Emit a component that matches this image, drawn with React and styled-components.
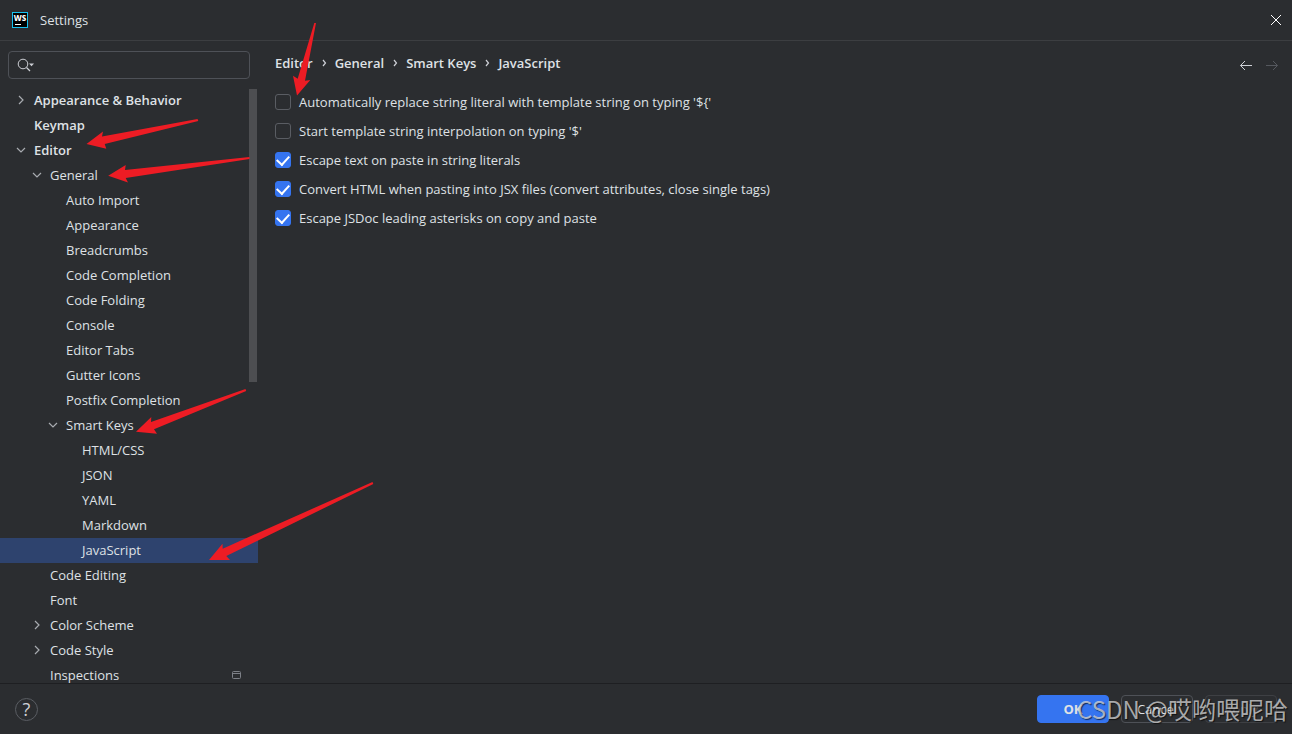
// App.jsx
import React, { useState } from "react";
import styled, { createGlobalStyle } from "styled-components";

const GlobalStyle = createGlobalStyle`
  * {
    box-sizing: border-box;
  }

  body {
    margin: 0;
    background: #2b2d30;
    color: #dfe1e5;
    font-family: "Open Sans", "Noto Sans", sans-serif;
    font-size: 13px;
  }

  button,
  input {
    font: inherit;
    color: inherit;
  }
`;

const Dialog = styled.div`
  position: relative;
  display: flex;
  flex-direction: column;
  height: 100vh;
  overflow: hidden;
`;

const TitleBar = styled.header`
  display: flex;
  align-items: center;
  gap: 12px;
  flex: 0 0 41px;
  padding: 0 8px 0 12px;
  border-bottom: 1px solid #3c3e41;
`;

const Title = styled.h1`
  flex: 1;
  margin: 0;
  font-size: 13px;
  font-weight: 400;
  line-height: 20px;
`;

const IconButton = styled.button`
  display: flex;
  align-items: center;
  justify-content: center;
  width: 16px;
  height: 16px;
  padding: 0;
  border: none;
  background: none;
`;

const Body = styled.div`
  display: flex;
  flex: 1;
  min-height: 0;
`;

const Sidebar = styled.aside`
  display: flex;
  flex-direction: column;
  flex: 0 0 258px;
  padding-top: 10px;
`;

const SearchBox = styled.label`
  display: flex;
  align-items: center;
  gap: 4px;
  flex: 0 0 28px;
  margin: 0 8px 9px;
  padding: 0 8px;
  border: 1px solid #4e5157;
  border-radius: 4px;
`;

const SearchInput = styled.input`
  flex: 1;
  min-width: 0;
  padding: 0;
  border: none;
  outline: none;
  background: none;
`;

const TreePane = styled.div`
  position: relative;
  flex: 1;
  min-height: 0;
  overflow: hidden;
`;

const Tree = styled.ul`
  margin: 0;
  padding: 0;
  list-style: none;
`;

const TreeRow = styled.button`
  display: flex;
  align-items: center;
  gap: 5px;
  width: 100%;
  height: 25px;
  padding: 0 16px 2px ${({ $level }) => 13 + $level * 16}px;
  border: none;
  background: ${({ $selected }) => ($selected ? "#2e436e" : "none")};
  font-weight: ${({ $level }) => ($level === 0 ? 600 : 400)};
  line-height: 20px;
  text-align: left;
`;

const ArrowSlot = styled.span`
  display: flex;
  width: 16px;
  height: 16px;
`;

const RowLabel = styled.span`
  flex: 1;
`;

const ScrollThumb = styled.div`
  position: absolute;
  top: 1px;
  right: 1px;
  width: 8px;
  height: 293px;
  background: #4d4e51;
`;

const Content = styled.main`
  flex: 1;
  min-width: 0;
  padding: 12px 12px 0 17px;
`;

const ContentHead = styled.div`
  display: flex;
  align-items: center;
  justify-content: space-between;
  margin-bottom: 19px;
`;

const Breadcrumbs = styled.nav`
  display: flex;
  align-items: center;
  gap: 7px;
  font-weight: 600;
  line-height: 20px;
`;

const Crumb = styled.a`
  color: inherit;
  text-decoration: none;
`;

const HistoryButtons = styled.div`
  display: flex;
  gap: 10px;
  padding-top: 4px;
`;

const OptionList = styled.div`
  display: flex;
  flex-direction: column;
  align-items: flex-start;
  gap: 9px;
`;

const Option = styled.label`
  display: flex;
  align-items: center;
  gap: 8px;
  line-height: 20px;
`;

const CheckBox = styled.input`
  display: grid;
  place-items: center;
  appearance: none;
  width: 16px;
  height: 16px;
  margin: 0;
  border: 1px solid #5a5d63;
  border-radius: 3px;

  &:checked {
    border-color: #3574f0;
    background: #3574f0;
  }

  &:checked::after {
    content: "";
    width: 6px;
    height: 10px;
    margin-bottom: 4px;
    border: solid #fff;
    border-width: 0 2px 2px 0;
    transform: rotate(42deg);
  }
`;

const Footer = styled.footer`
  display: flex;
  align-items: center;
  gap: 12px;
  flex: 0 0 51px;
  padding: 0 15px;
  border-top: 1px solid #1e1f22;
`;

const HelpButton = styled.button`
  width: 23px;
  height: 23px;
  margin-right: auto;
  padding: 0;
  border: 1px solid #5a5d63;
  border-radius: 50%;
  background: none;
  color: #ced0d6;
  font-size: 18px;
  line-height: 20px;
`;

const ActionButton = styled.button`
  width: 72px;
  height: 28px;
  padding: 0;
  border: 1px solid ${({ $primary }) => ($primary ? "#3574f0" : "#4e5157")};
  border-radius: 4px;
  background: ${({ $primary }) => ($primary ? "#3574f0" : "none")};
  font-weight: ${({ $primary }) => ($primary ? 700 : 400)};

  &:disabled {
    border-color: #3e4044;
    color: #5a5d63;
  }
`;

const Annotations = styled.svg`
  position: absolute;
  top: 0;
  left: 0;
  pointer-events: none;
`;

const Watermark = styled.div`
  position: absolute;
  right: 4px;
  bottom: 7px;
  color: rgba(215, 215, 215, 0.75);
  font-family: "Noto Sans CJK SC", sans-serif;
  font-size: 24px;
  font-weight: 400;
  line-height: 36px;
  text-shadow: 1px 1px 1px rgba(0, 0, 0, 0.6);
  white-space: nowrap;
  pointer-events: none;
`;

const rows = [
  { label: "Appearance & Behavior", level: 0, arrow: "right" },
  { label: "Keymap", level: 0 },
  { label: "Editor", level: 0, arrow: "down" },
  { label: "General", level: 1, arrow: "down" },
  { label: "Auto Import", level: 2 },
  { label: "Appearance", level: 2 },
  { label: "Breadcrumbs", level: 2 },
  { label: "Code Completion", level: 2 },
  { label: "Code Folding", level: 2 },
  { label: "Console", level: 2 },
  { label: "Editor Tabs", level: 2 },
  { label: "Gutter Icons", level: 2 },
  { label: "Postfix Completion", level: 2 },
  { label: "Smart Keys", level: 2, arrow: "down" },
  { label: "HTML/CSS", level: 3 },
  { label: "JSON", level: 3 },
  { label: "YAML", level: 3 },
  { label: "Markdown", level: 3 },
  { label: "JavaScript", level: 3 },
  { label: "Code Editing", level: 1 },
  { label: "Font", level: 1 },
  { label: "Color Scheme", level: 1, arrow: "right" },
  { label: "Code Style", level: 1, arrow: "right" },
  { label: "Inspections", level: 1, project: true },
];

const crumbs = ["Editor", "General", "Smart Keys", "JavaScript"];

const options = [
  {
    label: "Automatically replace string literal with template string on typing '${'",
    checked: false,
  },
  { label: "Start template string interpolation on typing '$'", checked: false },
  { label: "Escape text on paste in string literals", checked: true },
  {
    label: "Convert HTML when pasting into JSX files (convert attributes, close single tags)",
    checked: true,
  },
  { label: "Escape JSDoc leading asterisks on copy and paste", checked: true },
];

const arrows = [
  "314.3,23 316,23 305,80.7 310.3,80 297,95.5 293,75.7 297.7,78.7",
  "197.5,119 198.3,121 104.7,144 106.3,148.7 86.5,144 103,131.5 102,136.5",
  "249.5,157 249.5,159 125.7,178 128,182.5 108.2,175.8 125.7,165 125,170",
  "245.5,389 246.2,391 154,429.3 157,433.7 136,431.7 151.3,417 151,422",
  "372.5,482 373.3,484 226.3,556 230,560 209,560 222.5,543.7 222.7,548.7",
];

const Logo = () => (
  <svg width="16" height="16" viewBox="0 0 16 16" aria-hidden="true">
    <rect x="0.5" y="0.5" width="15" height="15" fill="#000" stroke="#16c2f0" />
    <text
      x="8"
      y="9"
      fill="#fff"
      fontFamily="Noto Sans, sans-serif"
      fontSize="8"
      fontWeight="800"
      textAnchor="middle"
    >
      WS
    </text>
    <path d="M3 12.5h6" stroke="#fff" />
  </svg>
);

const Chevron = ({ direction }) => (
  <svg width="16" height="16" viewBox="0 0 16 16" fill="none" stroke="#a8abb0" aria-hidden="true">
    <path d={direction === "down" ? "M4 6l4 4 4-4" : "M6 4l4 4-4 4"} strokeWidth="1.2" />
  </svg>
);

const SearchIcon = () => (
  <svg width="18" height="14" viewBox="0 0 18 14" fill="none" aria-hidden="true">
    <circle cx="6" cy="6" r="4.8" stroke="#ced0d6" />
    <path d="M9.5 9.5l3.5 3.5" stroke="#ced0d6" strokeWidth="1.2" />
    <path d="M12 5.5h5l-2.5 2.8z" fill="#ced0d6" />
  </svg>
);

const ProjectIcon = () => (
  <svg width="11" height="10" viewBox="0 0 11 10" fill="none" stroke="#7d8087" aria-hidden="true">
    <rect x="1.5" y="1.5" width="8" height="7" rx="1" />
    <path d="M1.5 3.5h8" />
  </svg>
);

const App = () => {
  const [selected, setSelected] = useState("JavaScript");

  return (
    <>
      <GlobalStyle />
      <Dialog>
        <TitleBar>
          <Logo />
          <Title>Settings</Title>
          <IconButton aria-label="Close">
            <svg width="12" height="12" viewBox="0 0 12 12" stroke="#fff" aria-hidden="true">
              <path d="M1 1l10 10M11 1L1 11" />
            </svg>
          </IconButton>
        </TitleBar>

        <Body>
          <Sidebar>
            <SearchBox>
              <SearchIcon />
              <SearchInput type="text" aria-label="Search settings" />
            </SearchBox>
            <TreePane>
              <Tree>
                {rows.map((row) => (
                  <li key={`${row.level}-${row.label}`}>
                    <TreeRow
                      $level={row.level}
                      $selected={row.label === selected}
                      onClick={() => setSelected(row.label)}
                    >
                      <ArrowSlot>{row.arrow && <Chevron direction={row.arrow} />}</ArrowSlot>
                      <RowLabel>{row.label}</RowLabel>
                      {row.project && <ProjectIcon />}
                    </TreeRow>
                  </li>
                ))}
              </Tree>
              <ScrollThumb />
            </TreePane>
          </Sidebar>

          <Content>
            <ContentHead>
              <Breadcrumbs>
                {crumbs.map((crumb, i) => (
                  <React.Fragment key={crumb}>
                    {i > 0 && (
                      <svg width="8" height="8" viewBox="0 0 8 8" fill="none" aria-hidden="true">
                        <path d="M3 1l2.5 3L3 7" stroke="#ced0d6" strokeWidth="1.2" />
                      </svg>
                    )}
                    <Crumb href="#">{crumb}</Crumb>
                  </React.Fragment>
                ))}
              </Breadcrumbs>
              <HistoryButtons>
                <IconButton aria-label="Back">
                  <svg width="16" height="16" viewBox="0 0 16 16" fill="none" stroke="#ced0d6">
                    <path d="M14 8.5H2.5M7 4L2.5 8.5 7 13" />
                  </svg>
                </IconButton>
                <IconButton aria-label="Forward" disabled>
                  <svg width="16" height="16" viewBox="0 0 16 16" fill="none" stroke="#55585e">
                    <path d="M2 8.5h11.5M9 4L13.5 8.5 9 13" />
                  </svg>
                </IconButton>
              </HistoryButtons>
            </ContentHead>

            <OptionList>
              {options.map((option) => (
                <Option key={option.label}>
                  <CheckBox type="checkbox" defaultChecked={option.checked} />
                  {option.label}
                </Option>
              ))}
            </OptionList>
          </Content>
        </Body>

        <Footer>
          <HelpButton aria-label="Help">?</HelpButton>
          <ActionButton $primary>OK</ActionButton>
          <ActionButton>Cancel</ActionButton>
          <ActionButton disabled>Apply</ActionButton>
        </Footer>

        <Annotations width="400" height="600" viewBox="0 0 400 600" fill="#ed1c24" aria-hidden="true">
          {arrows.map((points) => (
            <polygon key={points} points={points} />
          ))}
        </Annotations>
        <Watermark>CSDN @哎哟喂呢哈</Watermark>
      </Dialog>
    </>
  );
};

export default App;
